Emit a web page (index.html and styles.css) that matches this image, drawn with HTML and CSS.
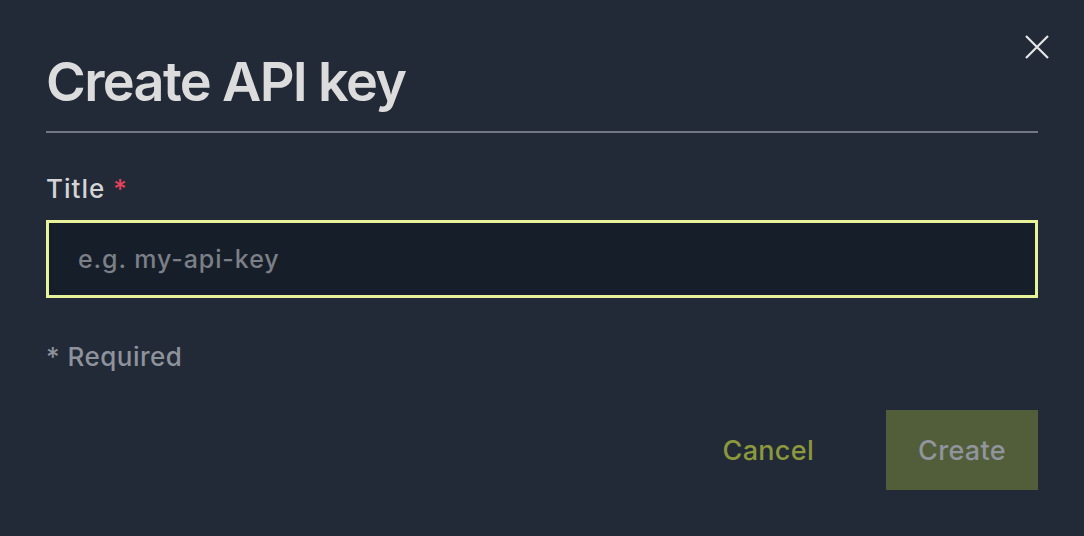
FILE: index.html
```html
<!DOCTYPE html>
<html>
<head>
<meta charset="utf-8">
<link rel="stylesheet" href="styles.css">
</head>
<body>
<div class="dialog">
  <button class="close" aria-label="Close">
    <svg width="24" height="24" viewBox="0 0 24 24"><path d="M1 1 L23 23 M23 1 L1 23" stroke="#e6e6e6" stroke-width="2.2" fill="none"/></svg>
  </button>
  <h1 class="title">Create API key</h1>
  <div class="divider"></div>
  <label class="label">Title <span class="req">*</span></label>
  <div class="input"><span class="placeholder">e.g. my-api-key</span></div>
  <div class="required">* Required</div>
  <div class="actions">
    <button class="btn cancel">Cancel</button>
    <button class="btn create">Create</button>
  </div>
</div>
</body>
</html>
```
FILE: styles.css
```css
html, body {
  margin: 0;
  padding: 0;
  background: #222a38;
  font-family: Inter, "Noto Sans", sans-serif;
}
.dialog {
  position: relative;
  padding: 44px 46px 0 46px;
  display: flex;
  flex-direction: column;
}
.close {
  position: absolute;
  top: 35px;
  right: 35px;
  background: none;
  border: 0;
  padding: 0;
  width: 24px;
  height: 24px;
  cursor: pointer;
}
.title {
  margin: 0;
  font-size: 54px;
  font-weight: 600;
  color: #dcdcdc;
  line-height: 76px;
  letter-spacing: -1.65px;
}
.divider {
  height: 2px;
  background: #737983;
  margin-top: 11px;
}
.label {
  margin-top: 38px;
  font-size: 26px;
  font-weight: 500;
  color: #d4d4d6;
  line-height: 36px;
  letter-spacing: 1px;
}
.req { color: #e8415c; }
.input {
  margin-top: 13px;
  height: 72px;
  border: 3px solid #e8f29a;
  background: #161e29;
  display: flex;
  align-items: center;
  padding-left: 29px;
}
.placeholder {
  font-size: 25px;
  font-weight: 500;
  letter-spacing: 0.9px;
  color: #7b7f86;
}
.required {
  margin-top: 41px;
  font-size: 26px;
  font-weight: 500;
  letter-spacing: 0.5px;
  color: #8e939b;
  line-height: 36px;
}
.actions {
  margin-top: 35px;
  display: flex;
  justify-content: flex-end;
  align-items: center;
  gap: 50px;
}
.btn {
  font-family: Inter, "Noto Sans", sans-serif;
  font-size: 27px;
  font-weight: 500;
  letter-spacing: 0.3px;
  border: 0;
  background: none;
  padding: 0;
}
.cancel {
  color: #8b983c;
  padding: 0 22px;
}
.create {
  width: 152px;
  height: 80px;
  background: #525d39;
  color: #8f949d;
}
```
